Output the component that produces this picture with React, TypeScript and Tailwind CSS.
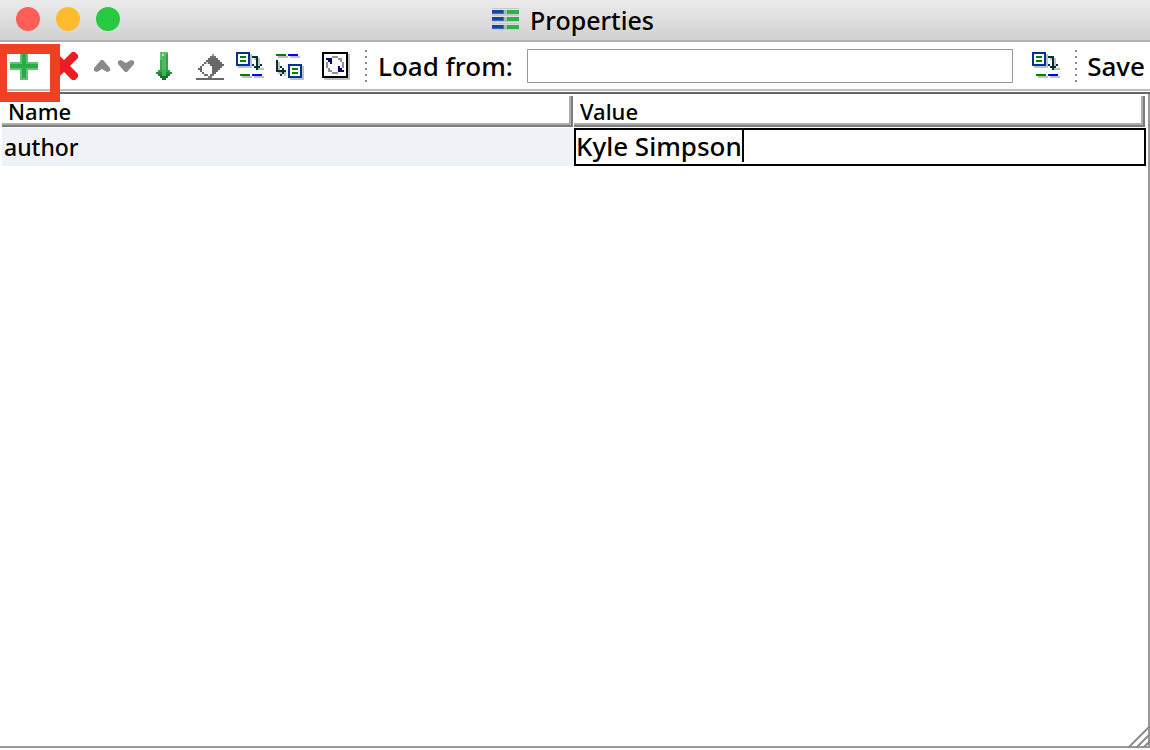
import { useState, type ReactNode } from "react";

type Px = [number, number, number, number, string];

function PixelIcon({ pixels }: { pixels: Px[] }) {
  return (
    <svg viewBox="0 0 14 14" shapeRendering="crispEdges" className="size-7" aria-hidden="true">
      {pixels.map(([x, y, w, h, c], i) => (
        <rect key={i} x={x} y={y} width={w} height={h} fill={c} />
      ))}
    </svg>
  );
}

const SHADOW = "#c0c0c0";
const BLUE = "#003399";
const GREEN = "#008000";
const LINE = "#0000ff";
const TEAL = "#003333";
const GREY = "#909090";
const NAVY = "#000080";

const loadIcon: Px[] = [
  [1, 1, 7, 7, SHADOW],
  [0, 0, 7, 7, BLUE],
  [1, 1, 5, 5, "#fff"],
  [2, 2, 3, 1, GREEN],
  [2, 4, 3, 1, GREEN],
  [9, 3, 3, 1, SHADOW],
  [11, 4, 1, 5, SHADOW],
  [10, 8, 4, 1, SHADOW],
  [8, 2, 3, 1, TEAL],
  [10, 3, 1, 5, TEAL],
  [8, 6, 1, 1, TEAL],
  [9, 7, 3, 1, TEAL],
  [12, 6, 1, 1, TEAL],
  [10, 8, 1, 1, TEAL],
  [3, 12, 5, 1, SHADOW],
  [9, 12, 5, 1, SHADOW],
  [2, 11, 5, 1, GREEN],
  [8, 11, 5, 1, LINE],
];

const saveIcon: Px[] = [
  [1, 2, 5, 1, SHADOW],
  [7, 2, 5, 1, SHADOW],
  [0, 1, 5, 1, GREEN],
  [6, 1, 5, 1, LINE],
  [1, 5, 1, 4, SHADOW],
  [1, 10, 4, 1, SHADOW],
  [4, 11, 1, 1, SHADOW],
  [0, 4, 1, 6, TEAL],
  [1, 9, 4, 1, TEAL],
  [2, 7, 1, 1, TEAL],
  [3, 8, 1, 3, TEAL],
  [2, 11, 1, 1, TEAL],
  [7, 7, 7, 7, SHADOW],
  [6, 6, 7, 7, BLUE],
  [7, 7, 5, 5, "#fff"],
  [8, 8, 3, 1, GREEN],
  [8, 10, 3, 1, GREEN],
];

const plusIcon: Px[] = [
  [5, 0, 4, 14, "#5fc471"],
  [0, 5, 14, 4, "#5fc471"],
  [6, 1, 2, 12, "#2bab47"],
  [0, 6, 14, 2, "#2bab47"],
];

const refreshIcon: Px[] = [
  [1, 1, 13, 13, SHADOW],
  [0, 0, 13, 13, "#000"],
  [1, 1, 11, 11, "#fff"],
  [5, 2, 3, 1, GREY],
  [8, 3, 2, 1, GREY],
  [9, 4, 1, 1, GREY],
  [10, 5, 1, 3, GREY],
  [2, 5, 1, 3, GREY],
  [3, 8, 1, 2, GREY],
  [4, 9, 1, 1, GREY],
  [5, 10, 3, 1, GREY],
  [2, 3, 3, 1, NAVY],
  [4, 4, 1, 2, NAVY],
  [3, 4, 1, 1, NAVY],
  [8, 7, 1, 3, NAVY],
  [9, 9, 2, 1, NAVY],
  [9, 8, 1, 1, NAVY],
];

const downArrow: Px[] = [
  [5, 0, 4, 9, "#5cc06c"],
  [6, 1, 2, 12, "#52b862"],
  [8, 1, 1, 9, "#35a04a"],
  [5, 4, 1, 5, "#3ea551"],
  [3, 10, 8, 1, "#1f8f34"],
  [4, 9, 6, 1, "#2fa044"],
  [4, 11, 6, 1, "#1c7f2f"],
  [5, 12, 4, 1, "#17732a"],
  [6, 13, 2, 1, "#1a6e2b"],
  [6, 9, 2, 3, "#45b058"],
  [6, 1, 1, 1, "#e8c890"],
];

const eraserIcon: Px[] = [
  [8, 1, 1, 1, "#8f8f8f"],
  [7, 2, 3, 1, "#707070"],
  [6, 3, 5, 1, "#686868"],
  [5, 4, 7, 1, "#686868"],
  [4, 5, 9, 1, "#686868"],
  [3, 6, 11, 1, "#686868"],
  [2, 7, 11, 1, "#686868"],
  [1, 8, 11, 1, "#686868"],
  [2, 9, 9, 1, "#686868"],
  [3, 10, 7, 1, "#686868"],
  [4, 11, 5, 1, "#707070"],
  [6, 12, 2, 1, "#808080"],
  [5, 5, 1, 1, "#d0d0d0"],
  [4, 6, 3, 1, "#fff"],
  [3, 7, 5, 1, "#fff"],
  [3, 8, 5, 1, "#fff"],
  [3, 9, 5, 1, "#fff"],
  [4, 10, 4, 1, "#fff"],
  [6, 11, 1, 1, "#fff"],
  [0, 13, 14, 1, "#686868"],
];

function Grip() {
  return (
    <svg viewBox="0 0 2 32" className="h-8 w-0.5 shrink-0" aria-hidden="true" shapeRendering="crispEdges">
      {[0, 6, 12, 18, 24, 30].map((y) => (
        <rect key={y} y={y} width="2" height="2" fill="#8a8a8a" />
      ))}
    </svg>
  );
}

function ToolButton({ label, children, className = "" }: { label: string; children: ReactNode; className?: string }) {
  return (
    <button type="button" aria-label={label} className={`block shrink-0 ${className}`}>
      {children}
    </button>
  );
}

function HeaderCell({ children }: { children: ReactNode }) {
  return (
    <th scope="col" className="p-0 pt-0.5 pr-px pb-px text-left font-medium">
      <div className="h-[31px] border-r-2 border-b-2 border-[#7d7d7d] pl-1.5 text-[22px] leading-[30px] shadow-[inset_-2px_-2px_#adadad]">
        {children}
      </div>
    </th>
  );
}

export default function App() {
  const [source, setSource] = useState("");
  const [value, setValue] = useState("Kyle Simpson");

  return (
    <div className="flex h-screen flex-col overflow-hidden bg-white pb-0.5 font-['Noto_Sans',sans-serif] font-medium text-black">
      <header className="grid h-[42px] shrink-0 grid-cols-[1fr_auto_1fr] items-center border-b-2 border-[#b0b0b0] bg-linear-to-b from-[#ebebeb] to-[#d1d1d1] pr-1">
        <div className="flex gap-4 pb-0.5 pl-4">
          <button type="button" aria-label="Close" className="size-6 rounded-full bg-[#ff5f57]" />
          <button type="button" aria-label="Minimize" className="size-6 rounded-full bg-[#fdbc2e]" />
          <button type="button" aria-label="Zoom" className="size-6 rounded-full bg-[#28ca41]" />
        </div>
        <div className="flex items-center gap-2.5">
          <svg viewBox="0 0 28 24" className="h-6 w-7" shapeRendering="crispEdges" aria-hidden="true">
            {[2, 9, 17].map((y) => (
              <g key={y}>
                <rect x="0" y={y - 2} width="27" height="1" fill="#c3cad6" />
                <rect x="0" y={y} width="12" height="4" fill="#3f6cba" />
                <rect x="0" y={y} width="11" height="3" fill="#1545a3" />
                <rect x="12" y={y} width="3" height="4" fill="#a3bda8" />
                <rect x="15" y={y} width="12" height="4" fill="#2db34a" />
                <rect x="0" y={y + 4} width="27" height="1" fill="#bccbc6" />
              </g>
            ))}
          </svg>
          <h1 className="text-[25px] leading-8">Properties</h1>
        </div>
      </header>

      <div className="relative z-10 flex h-[49px] shrink-0 items-center border-b-2 border-[#bdbdbd] pl-2.5">
        <ToolButton label="Add">
          <PixelIcon pixels={plusIcon} />
        </ToolButton>
        <ToolButton label="Delete" className="ml-3">
          <svg viewBox="0 0 28 28" className="size-7" aria-hidden="true">
            <path d="M3 0H6L14 8 22 0H25L28 3V6L20 14 28 22V25L25 28H22L14 20 6 28H3L0 25V22L8 14 0 6V3Z" fill="#ed1c24" />
          </svg>
        </ToolButton>
        <ToolButton label="Move up" className="ml-4">
          <svg viewBox="0 0 16 14" className="h-3.5 w-4" aria-hidden="true">
            <path d="M7 1H9L16 9V12L13 13 8 10 3 13 0 12V9Z" fill="#8a8a8a" />
          </svg>
        </ToolButton>
        <ToolButton label="Move down" className="ml-2">
          <svg viewBox="0 0 16 14" className="h-3.5 w-4" aria-hidden="true">
            <path d="M7 13H9L16 5V2L13 1 8 4 3 1 0 2V5Z" fill="#8a8a8a" />
          </svg>
        </ToolButton>
        <ToolButton label="Insert below" className="ml-4">
          <PixelIcon pixels={downArrow} />
        </ToolButton>
        <ToolButton label="Clear" className="ml-[18px]">
          <PixelIcon pixels={eraserIcon} />
        </ToolButton>
        <ToolButton label="Load" className="ml-3">
          <PixelIcon pixels={loadIcon} />
        </ToolButton>
        <ToolButton label="Store" className="ml-3">
          <PixelIcon pixels={saveIcon} />
        </ToolButton>
        <ToolButton label="Refresh" className="ml-[18px]">
          <PixelIcon pixels={refreshIcon} />
        </ToolButton>
        <div className="ml-[15px] flex">
          <Grip />
        </div>
        <label htmlFor="source" className="ml-[11px] shrink-0 text-[26px] leading-8 whitespace-nowrap">
          Load from:
        </label>
        <input
          id="source"
          type="text"
          value={source}
          onChange={(e) => setSource(e.target.value)}
          className="ml-3.5 h-[34px] min-w-0 grow border border-[#999] px-1 text-[26px] outline-none"
        />
        <ToolButton label="Load from source" className="ml-[19px]">
          <PixelIcon pixels={loadIcon} />
        </ToolButton>
        <div className="ml-[15px] flex">
          <Grip />
        </div>
        <button type="button" className="ml-2.5 shrink-0 pr-[5px] text-[26px] leading-8">
          Save
        </button>
        <div className="pointer-events-none absolute top-0.5 left-0 h-[58px] w-[60px] border-t-[10px] border-r-[10px] border-b-[10px] border-l-[7px] border-[#ee4023]" />
      </div>

      <main className="relative mt-px flex min-h-0 grow flex-col border-t-2 border-[#666]">
        <div className="grow border-r-2 border-b-2 border-[#999] pr-0.5 pl-0.5">
          <table className="w-full table-fixed border-collapse">
            <thead>
              <tr>
                <HeaderCell>Name</HeaderCell>
                <HeaderCell>Value</HeaderCell>
              </tr>
            </thead>
            <tbody>
              <tr>
                <td className="bg-[#eff3f7] p-0 pl-0.5 text-[23px] leading-8">author</td>
                <td className="p-0">
                  <div className="flex h-[38px] border-2 border-black">
                    <input
                      type="text"
                      aria-label="Value of author"
                      value={value}
                      onChange={(e) => setValue(e.target.value)}
                      className="field-sizing-content h-8 max-w-full text-[26px] leading-8 caret-transparent outline-none"
                    />
                    <span className="h-8 w-0.5 bg-black" />
                  </div>
                </td>
              </tr>
            </tbody>
          </table>
        </div>
        <svg viewBox="0 0 22 22" className="absolute right-0 bottom-0 size-[22px]" aria-hidden="true">
          <path d="M0 22 22 0M8 22 22 8M15 22 22 15" stroke="#8c8c8c" strokeWidth="2" fill="none" />
        </svg>
      </main>
    </div>
  );
}
